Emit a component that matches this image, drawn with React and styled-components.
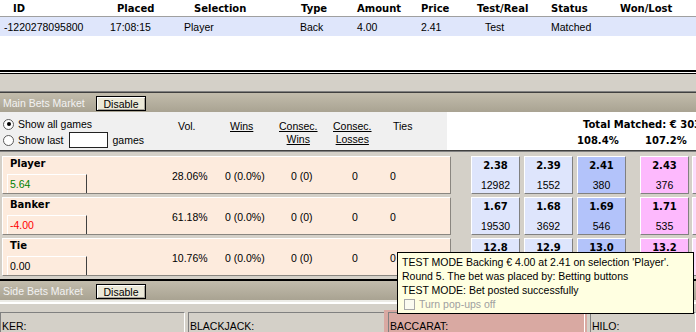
import React from 'react';
import styled, { createGlobalStyle } from 'styled-components';

const GlobalStyle = createGlobalStyle`
  html, body { margin: 0; padding: 0; background: #d4d0c8; }
  * { box-sizing: border-box; }
`;

const REG = `"Liberation Sans", Arial, sans-serif`;
const BOLD = `bold 10px "DejaVu Sans", Verdana, sans-serif`;

const Screen = styled.div`
  position: relative;
  width: 696px;
  height: 332px;
  overflow: hidden;
  background: #d4d0c8;
  display: flex;
  flex-direction: column;
  color: #000;
  font-family: ${REG};
  font-size: 10.5px;
`;

/* ---------- bets table ---------- */
const BetsPanel = styled.div`
  flex: none;
  height: 70px;
  background: #fff;
`;

const BetsRow = styled.div`
  display: grid;
  grid-template-columns: ${p => p.$cols};
  align-items: center;
  height: ${p => (p.$header ? '17px' : '19px')};
  background: ${p => (p.$selected ? '#dfe6fb' : 'transparent')};
  border-bottom: ${p => (p.$header ? '1px solid #a0a0a0' : '0')};
`;

const HeadCell = styled.div`
  font: ${BOLD};
  padding-left: ${p => p.$indent}px;
  white-space: nowrap;
`;

const BodyCell = styled.div`
  padding-left: ${p => p.$indent}px;
  white-space: nowrap;
`;

const Splitter = styled.div`
  flex: none;
  height: 23px;
  background: linear-gradient(
    to bottom,
    #000 0 2px,
    #fff 2px 3px,
    #000 3px 4px,
    #d4d0c8 4px 21px,
    #808080 21px 22px,
    #404040 22px 23px
  );
`;

/* ---------- market bars ---------- */
const MarketBar = styled.div`
  flex: none;
  height: ${p => p.$h}px;
  display: flex;
  align-items: flex-start;
  padding: 3px 0 0 3px;
  background: linear-gradient(to bottom, #c2bcac, #a9a392);
  border-top: ${p => (p.$topLine ? '2px solid #000' : '0')};
`;

const MarketLabel = styled.span`
  width: 93px;
  flex: none;
  line-height: 15px;
  color: #f2f2f2;
  white-space: nowrap;
`;

const DisableButton = styled.button`
  width: 50px;
  height: 15px;
  padding: 0;
  margin: 0;
  font: 10.5px ${REG};
  color: #000;
  background: #ece9d8;
  border: 1px solid #000;
  box-shadow: inset 1px 1px #fff, inset -1px -1px #a7a49a;
  line-height: 12px;
`;

/* ---------- options / headers ---------- */
const OptionsRow = styled.div`
  flex: none;
  height: 38px;
  display: flex;
`;

const OptionsLeft = styled.div`
  width: 447px;
  flex: none;
  background: #f0f0f0;
  display: flex;
`;

const RadioGroup = styled.div`
  width: 178px;
  flex: none;
  padding-top: 4px;
  display: grid;
  grid-auto-rows: 16px;
`;

const RadioLine = styled.label`
  display: flex;
  align-items: center;
  padding-left: 3px;
  white-space: nowrap;
`;

const Radio = styled.span`
  position: relative;
  width: 11px;
  height: 11px;
  flex: none;
  margin-right: 4px;
  border-radius: 50%;
  border: 1px solid #5a5a5a;
  background: #fff;
  &::after {
    content: '';
    display: ${p => (p.$checked ? 'block' : 'none')};
    position: absolute;
    left: 2.5px;
    top: 2.5px;
    width: 4px;
    height: 4px;
    border-radius: 50%;
    background: #000;
  }
`;

const GamesInput = styled.span`
  display: inline-block;
  width: 39px;
  height: 16px;
  margin: 0 5px 0 5px;
  background: #fff;
  border: 1px solid #222;
`;

const StatHeads = styled.div`
  display: grid;
  grid-template-columns: 52px 49px 54px 60px auto;
  padding-top: 8px;
  line-height: 13px;
`;

const StatHead = styled.div`
  display: inline-block;
  text-align: center;
  justify-self: start;
  text-decoration: ${p => (p.$link ? 'underline' : 'none')};
  white-space: nowrap;
`;

const OptionsRight = styled.div`
  flex: 1;
  background: #fff;
  padding: 5px 0 0 130px;
  font: ${BOLD};
  line-height: 16px;
  white-space: nowrap;
  overflow: hidden;
`;

const TotalLine = styled.div`
  padding-left: 6px;
`;

const PctLine = styled.div`
  display: grid;
  grid-template-columns: 68px auto;
`;

/* ---------- runner rows ---------- */
const RowsArea = styled.div`
  flex: none;
  height: 129px;
  border-top: 1px solid #404040;
  box-shadow: inset 0 1px #808080;
  padding: 5px 0 0 2px;
  display: flex;
  flex-direction: column;
  gap: 3px;
`;

const RunnerRow = styled.div`
  display: flex;
  height: 38px;
  flex: none;
`;

const RunnerPanel = styled.div`
  width: 449px;
  height: 38px;
  flex: none;
  margin-right: 20px;
  display: flex;
  background: #fdebdd;
  border-top: 1px solid #fff;
  border-left: 1px solid #fff;
  border-right: 1px solid #8a8680;
  border-bottom: 1px solid #8a8680;
`;

const NameBlock = styled.div`
  width: 169px;
  flex: none;
  padding-left: 4px;
  display: flex;
  flex-direction: column;
`;

const RunnerName = styled.div`
  font: ${BOLD};
  line-height: 14px;
  padding-left: 3px;
`;

const PLBox = styled.div`
  width: 80px;
  height: 19px;
  margin-top: 3px;
  padding: 3px 0 0 2px;
  border-top: 1px solid #fff;
  border-left: 1px solid #fff;
  border-right: 1px solid #404040;
  color: ${p => p.$color};
  line-height: 13px;
`;

const StatValues = styled.div`
  display: grid;
  grid-template-columns: 53px 66px 61px 38px auto;
  padding-top: 12px;
  line-height: 14px;
  white-space: nowrap;
`;

const PriceGroup = styled.div`
  display: flex;
  flex: none;
  gap: ${p => p.$gap}px;
  margin-right: ${p => p.$after}px;
`;

const PriceCell = styled.div`
  width: 49px;
  height: 38px;
  flex: none;
  display: flex;
  flex-direction: column;
  align-items: center;
  padding-top: 2px;
  background: ${p => p.$bg};
  border-top: 1px solid #fff;
  border-left: 1px solid #fff;
  border-right: 1px solid #808080;
  border-bottom: 1px solid #808080;
`;

const Price = styled.div`
  font: ${BOLD};
  line-height: 14px;
`;

const Volume = styled.div`
  margin-top: 5px;
  line-height: 14px;
`;

/* ---------- side bets + status ---------- */
const SideContent = styled.div`
  flex: none;
  height: 10px;
  background: linear-gradient(
    to bottom,
    #ecebe6 0 2px,
    #ffffff 2px 4px,
    #d4d0c8 4px 10px
  );
`;

const StatusBar = styled.div`
  flex: none;
  height: 22px;
  display: flex;
  align-items: stretch;
`;

const StatusPanel = styled.div`
  width: ${p => p.$w}px;
  flex: ${p => (p.$grow ? 1 : 'none')};
  margin: ${p => (p.$inner ? '0' : '2px 0 0 0')};
  margin-right: ${p => p.$mr || 0}px;
  padding: 7px 0 0 1px;
  line-height: 13px;
  border-top: 1px solid #808080;
  border-left: 1px solid #808080;
  border-right: 1px solid #fff;
  white-space: nowrap;
  overflow: hidden;
`;

const HighlightWrap = styled.div`
  width: 203px;
  flex: none;
  margin: 0 3px 0 -1px;
  padding: 2px 2px 0 4px;
  display: flex;
  background: #d9a9a2;
`;

/* ---------- tooltip ---------- */
const Tooltip = styled.div`
  position: absolute;
  left: 397px;
  top: 252px;
  width: 297px;
  height: 62px;
  padding: 2px 0 0 4px;
  background: #ffffe1;
  border: 1px solid #000;
  line-height: 14px;
  white-space: nowrap;
`;

const CheckRow = styled.div`
  display: flex;
  align-items: center;
  color: #a0a0a0;
  padding-left: 2px;
`;

const CheckBox = styled.span`
  width: 11px;
  height: 11px;
  flex: none;
  margin-right: 4px;
  border: 1px solid #a8a8a8;
  background: #fbfbf0;
`;

const columns = [
  { label: 'ID', w: 106, hi: 13, vi: 4 },
  { label: 'Placed', w: 74, hi: 11, vi: 4 },
  { label: 'Selection', w: 116, hi: 14, vi: 4 },
  { label: 'Type', w: 57, hi: 5, vi: 4 },
  { label: 'Amount', w: 64, hi: 4, vi: 4 },
  { label: 'Price', w: 56, hi: 4, vi: 4 },
  { label: 'Test/Real', w: 74, hi: 4, vi: 12 },
  { label: 'Status', w: 69, hi: 4, vi: 4 },
  { label: 'Won/Lost', w: 80, hi: 4, vi: 4 },
];

const bet = ['-1220278095800', '17:08:15', 'Player', 'Back', '4.00', '2.41', 'Test', 'Matched', ''];

const runners = [
  {
    name: 'Player', pl: '5.64', color: '#008000',
    stats: ['28.06%', '0 (0.0%)', '0 (0)', '0', '0'],
    back: [['2.38', '12982'], ['2.39', '1552'], ['2.41', '380']],
    lay: [['2.43', '376'], ['', '']],
  },
  {
    name: 'Banker', pl: '-4.00', color: '#ff0000',
    stats: ['61.18%', '0 (0.0%)', '0 (0)', '0', '0'],
    back: [['1.67', '19530'], ['1.68', '3692'], ['1.69', '546']],
    lay: [['1.71', '535'], ['', '']],
  },
  {
    name: 'Tie', pl: '0.00', color: '#000',
    stats: ['10.76%', '0 (0.0%)', '0 (0)', '0', '0'],
    back: [['12.8', '2410'], ['12.9', '1188'], ['13.0', '95']],
    lay: [['13.2', '120'], ['', '']],
  },
];

const backColors = ['#dee5fc', '#dee5fc', '#b3c3fa'];
const layColors = ['#fdb9fd', '#fcdcfc'];

export default function App() {
  const cols = columns.map(c => `${c.w}px`).join(' ');
  return (
    <Screen>
      <GlobalStyle />
      <BetsPanel>
        <BetsRow $header $cols={cols}>
          {columns.map(c => (
            <HeadCell key={c.label} $indent={c.hi}>{c.label}</HeadCell>
          ))}
        </BetsRow>
        <BetsRow $selected $cols={cols}>
          {columns.map((c, i) => (
            <BodyCell key={c.label} $indent={c.vi}>{bet[i]}</BodyCell>
          ))}
        </BetsRow>
      </BetsPanel>
      <Splitter />
      <MarketBar $h={19}>
        <MarketLabel>Main Bets Market</MarketLabel>
        <DisableButton>Disable</DisableButton>
      </MarketBar>
      <OptionsRow>
        <OptionsLeft>
          <RadioGroup>
            <RadioLine><Radio $checked />Show all games</RadioLine>
            <RadioLine><Radio />Show last<GamesInput />games</RadioLine>
          </RadioGroup>
          <StatHeads>
            <StatHead>Vol.</StatHead>
            <StatHead $link>Wins</StatHead>
            <StatHead $link>Consec.<br />Wins</StatHead>
            <StatHead $link>Consec.<br />Losses</StatHead>
            <StatHead>Ties</StatHead>
          </StatHeads>
        </OptionsLeft>
        <OptionsRight>
          <TotalLine>Total Matched: € 303</TotalLine>
          <PctLine><span>108.4%</span><span>107.2%</span></PctLine>
        </OptionsRight>
      </OptionsRow>
      <RowsArea>
        {runners.map(r => (
          <RunnerRow key={r.name}>
            <RunnerPanel>
              <NameBlock>
                <RunnerName>{r.name}</RunnerName>
                <PLBox $color={r.color}>{r.pl}</PLBox>
              </NameBlock>
              <StatValues>
                {r.stats.map((s, i) => <span key={i}>{s}</span>)}
              </StatValues>
            </RunnerPanel>
            <PriceGroup $gap={4} $after={14}>
              {r.back.map(([p, v], i) => (
                <PriceCell key={i} $bg={backColors[i]}>
                  <Price>{p}</Price>
                  <Volume>{v}</Volume>
                </PriceCell>
              ))}
            </PriceGroup>
            <PriceGroup $gap={3} $after={0}>
              {r.lay.map(([p, v], i) => (
                <PriceCell key={i} $bg={layColors[i]}>
                  <Price>{p}</Price>
                  <Volume>{v}</Volume>
                </PriceCell>
              ))}
            </PriceGroup>
          </RunnerRow>
        ))}
      </RowsArea>
      <MarketBar $h={21} $topLine>
        <MarketLabel>Side Bets Market</MarketLabel>
        <DisableButton>Disable</DisableButton>
      </MarketBar>
      <SideContent />
      <StatusBar>
        <StatusPanel $w={185} $mr={3}>KER:</StatusPanel>
        <StatusPanel $w={197}>BLACKJACK:</StatusPanel>
        <HighlightWrap>
          <StatusPanel $inner $grow>BACCARAT:</StatusPanel>
        </HighlightWrap>
        <StatusPanel $grow>HILO:</StatusPanel>
      </StatusBar>
      <Tooltip>
        <div>TEST MODE Backing € 4.00 at 2.41 on selection 'Player'.</div>
        <div>Round 5. The bet was placed by: Betting buttons</div>
        <div>TEST MODE: Bet posted successfully</div>
        <CheckRow><CheckBox />Turn pop-ups off</CheckRow>
      </Tooltip>
    </Screen>
  );
}
